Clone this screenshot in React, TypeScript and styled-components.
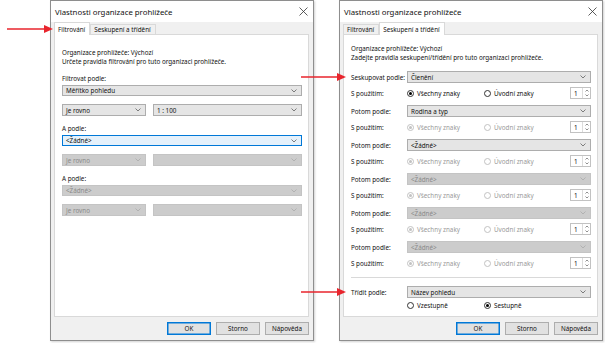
import React from "react";
import styled, { createGlobalStyle, css } from "styled-components";

const GlobalStyle = createGlobalStyle`
  html, body {
    margin: 0;
    padding: 0;
    background: #ffffff;
  }
  body {
    font-family: "Noto Sans", "DejaVu Sans", sans-serif;
    font-size: 6.3px;
    color: #111111;
  }
`;

const Page = styled.div`
  position: relative;
  width: 605px;
  height: 343px;
  box-sizing: border-box;
  padding-left: 50px;
  display: flex;
  gap: 25px;
  overflow: hidden;
  background: #ffffff;
`;

const Dialog = styled.div`
  width: 264px;
  height: 341px;
  box-sizing: border-box;
  border: 1px solid #8e8e8e;
  background: #f0f0f0;
  display: flex;
  flex-direction: column;
  box-shadow: 1px 1px 2px rgba(0, 0, 0, 0.18);
`;

const TitleBar = styled.div`
  height: 21px;
  flex: none;
  background: #ffffff;
  display: flex;
  align-items: center;
  justify-content: space-between;
  padding: 0 5px 0 4px;
  font-size: 7.8px;
`;

const Body = styled.div`
  flex: 1;
  display: flex;
  flex-direction: column;
  padding: 1px 4px 0 3px;
`;

const TabStrip = styled.div`
  height: 12px;
  display: flex;
  align-items: flex-end;
  margin-bottom: -1px;
  position: relative;
  z-index: 1;
`;

const Tab = styled.div<{ $active?: boolean }>`
  box-sizing: border-box;
  border: 1px solid #d9d9d9;
  border-bottom: none;
  padding: 0 4px 0 3px;
  display: flex;
  align-items: center;
  ${(p) =>
    p.$active
      ? css`
          height: 13px;
          background: #ffffff;
        `
      : css`
          height: 10px;
          background: #f0f0f0;
          margin-bottom: 1px;
        `}
`;

const Panel = styled.div<{ $top: number }>`
  height: 283px;
  box-sizing: border-box;
  background: #ffffff;
  border: 1px solid #d9d9d9;
  padding: ${(p) => p.$top}px 6px 0 7px;
  display: flex;
  flex-direction: column;
`;

const Info = styled.div`
  line-height: 9px;
`;

const Footer = styled.div`
  display: flex;
  justify-content: flex-end;
  gap: 5px;
  padding: 5px 0 0 0;
`;

const Button = styled.div<{ $default?: boolean }>`
  width: 44px;
  height: 13px;
  box-sizing: border-box;
  background: #e1e1e1;
  border: 1px solid ${(p) => (p.$default ? "#0078d7" : "#adadad")};
  box-shadow: ${(p) => (p.$default ? "inset 0 0 0 0.5px #0078d7" : "none")};
  display: flex;
  align-items: center;
  justify-content: center;
`;

type ComboState = "normal" | "focus" | "disabled";

const ComboBox = styled.div<{ $state: ComboState; $width?: number }>`
  height: 12px;
  box-sizing: border-box;
  ${(p) => (p.$width ? `width: ${p.$width}px; flex: none;` : "flex: 1;")}
  display: flex;
  align-items: center;
  justify-content: space-between;
  padding: 0 4px 0 3px;
  border: 1px solid;
  ${(p) =>
    p.$state === "focus"
      ? css`
          background: #e5f1fb;
          border-color: #0078d7;
          color: #111;
        `
      : p.$state === "disabled"
      ? css`
          background: #cccccc;
          border-color: #c4c4c4;
          color: #8a8a8a;
        `
      : css`
          background: #e5e5e5;
          border-color: #adadad;
          color: #111;
        `}
`;

const Chevron = ({ muted }: { muted?: boolean }) => (
  <svg width="6" height="4" viewBox="0 0 6 4">
    <polyline
      points="0.5,0.5 3,3 5.5,0.5"
      fill="none"
      stroke={muted ? "#aaaaaa" : "#606060"}
      strokeWidth="0.8"
    />
  </svg>
);

const Combo = ({
  text,
  state = "normal",
  width,
}: {
  text?: string;
  state?: ComboState;
  width?: number;
}) => (
  <ComboBox $state={state} $width={width}>
    <span>{text}</span>
    <Chevron muted={state === "disabled"} />
  </ComboBox>
);

/* ---- filter tab ---- */

const FilterGroup = styled.div<{ $gap: number }>`
  display: flex;
  flex-direction: column;
  margin-top: ${(p) => p.$gap}px;
`;

const FieldLabel = styled.div`
  line-height: 9px;
  margin-bottom: 2px;
`;

const ComboPair = styled.div`
  display: flex;
  gap: 7px;
  margin-top: 8px;
`;

/* ---- grouping tab ---- */

const SortGroup = styled.div<{ $gap: number }>`
  display: flex;
  flex-direction: column;
  gap: 3px;
  margin-top: ${(p) => p.$gap}px;
`;

const FieldRow = styled.div`
  display: flex;
  align-items: center;
  min-height: 12px;
`;

const RowLabel = styled.div`
  width: 56px;
  flex: none;
  white-space: nowrap;
`;

const UsingRow = styled.div<{ $indent?: boolean }>`
  display: flex;
  align-items: center;
  height: 14px;
  padding-left: ${(p) => (p.$indent ? 56 : 0)}px;
`;

const RadioItem = styled.div<{ $disabled?: boolean; $wide?: boolean }>`
  display: flex;
  align-items: center;
  gap: 3px;
  width: ${(p) => (p.$wide ? 77 : 82)}px;
  flex: none;
  color: ${(p) => (p.$disabled ? "#9a9a9a" : "#111")};
`;

const RadioCircle = styled.span<{ $checked?: boolean; $disabled?: boolean }>`
  width: 7px;
  height: 7px;
  box-sizing: border-box;
  border-radius: 50%;
  border: 1px solid ${(p) => (p.$disabled ? "#c2c2c2" : "#333333")};
  background: #ffffff;
  display: flex;
  align-items: center;
  justify-content: center;
  &::after {
    content: "";
    width: 3px;
    height: 3px;
    border-radius: 50%;
    background: ${(p) => (p.$disabled ? "#c2c2c2" : "#000")};
    display: ${(p) => (p.$checked ? "block" : "none")};
  }
`;

const Spinner = styled.div`
  margin-left: auto;
  width: 21px;
  height: 12px;
  box-sizing: border-box;
  border: 1px solid #c2c2c2;
  background: #fff;
  display: flex;
  align-items: center;
  justify-content: space-between;
  padding-left: 3px;
`;

const SpinArrows = styled.div`
  width: 7px;
  height: 100%;
  border-left: 1px solid #dcdcdc;
  display: flex;
  flex-direction: column;
  align-items: center;
  justify-content: space-around;
`;

const Separator = styled.div`
  height: 1px;
  background: #d9d9d9;
  margin: 7px 0 8px 0;
`;

const Arrow = styled.svg<{ $x: number; $y: number }>`
  position: absolute;
  left: ${(p) => p.$x}px;
  top: ${(p) => p.$y - 5}px;
  overflow: visible;
`;

const RedArrow = ({ x, y, length }: { x: number; y: number; length: number }) => (
  <Arrow $x={x} $y={y} width={length} height="10">
    <line x1="0" y1="5" x2={length - 8} y2="5" stroke="#e8252d" strokeWidth="1.3" />
    <polygon points={`${length - 9},1 ${length},5 ${length - 9},9`} fill="#e8252d" />
  </Arrow>
);

const CloseIcon = () => (
  <svg width="9" height="9" viewBox="0 0 9 9">
    <path d="M0.5 0.5 L8.5 8.5 M8.5 0.5 L0.5 8.5" stroke="#333" strokeWidth="0.8" />
  </svg>
);

const Radio = ({
  label,
  checked,
  disabled,
  wide,
}: {
  label: string;
  checked?: boolean;
  disabled?: boolean;
  wide?: boolean;
}) => (
  <RadioItem $disabled={disabled} $wide={wide}>
    <RadioCircle $checked={checked} $disabled={disabled} />
    {label}
  </RadioItem>
);

const SpinBox = () => (
  <Spinner>
    1
    <SpinArrows>
      <svg width="4" height="3" viewBox="0 0 4 3">
        <polyline points="0.5,2.5 2,1 3.5,2.5" fill="none" stroke="#606060" strokeWidth="0.7" />
      </svg>
      <svg width="4" height="3" viewBox="0 0 4 3">
        <polyline points="0.5,0.5 2,2 3.5,0.5" fill="none" stroke="#606060" strokeWidth="0.7" />
      </svg>
    </SpinArrows>
  </Spinner>
);

const groups = [
  { label: "Seskupovat podle:", value: "Členění", combo: "normal", radios: false },
  { label: "Potom podle:", value: "Rodina a typ", combo: "normal", radios: true },
  { label: "Potom podle:", value: "<Žádné>", combo: "normal", radios: true },
  { label: "Potom podle:", value: "<Žádné>", combo: "disabled", radios: true },
  { label: "Potom podle:", value: "<Žádné>", combo: "disabled", radios: true },
  { label: "Potom podle:", value: "<Žádné>", combo: "disabled", radios: true },
] as const;

const Footerbar = () => (
  <Footer>
    <Button $default>OK</Button>
    <Button>Storno</Button>
    <Button>Nápověda</Button>
  </Footer>
);

const App = () => {
  return (
    <Page>
      <GlobalStyle />
      <Dialog>
        <TitleBar>
          <span>Vlastnosti organizace prohlížeče</span>
          <CloseIcon />
        </TitleBar>
        <Body>
          <TabStrip>
            <Tab $active>Filtrování</Tab>
            <Tab>Seskupení a třídění</Tab>
          </TabStrip>
          <Panel $top={13}>
            <Info>
              Organizace prohlížeče: Výchozí
              <br />
              Určete pravidla filtrování pro tuto organizaci prohlížeče.
            </Info>
            <FilterGroup $gap={8}>
              <FieldLabel>Filtrovat podle:</FieldLabel>
              <Combo text="Měřítko pohledu" />
              <ComboPair>
                <Combo text="Je rovno" width={84} />
                <Combo text="1 : 100" />
              </ComboPair>
            </FilterGroup>
            <FilterGroup $gap={8}>
              <FieldLabel>A podle:</FieldLabel>
              <Combo text="<Žádné>" state="focus" />
              <ComboPair>
                <Combo text="Je rovno" width={84} state="disabled" />
                <Combo state="disabled" />
              </ComboPair>
            </FilterGroup>
            <FilterGroup $gap={8}>
              <FieldLabel>A podle:</FieldLabel>
              <Combo text="<Žádné>" state="disabled" />
              <ComboPair>
                <Combo text="Je rovno" width={84} state="disabled" />
                <Combo state="disabled" />
              </ComboPair>
            </FilterGroup>
          </Panel>
          <Footerbar />
        </Body>
      </Dialog>

      <Dialog>
        <TitleBar>
          <span>Vlastnosti organizace prohlížeče</span>
          <CloseIcon />
        </TitleBar>
        <Body>
          <TabStrip>
            <Tab>Filtrování</Tab>
            <Tab $active>Seskupení a třídění</Tab>
          </TabStrip>
          <Panel $top={9}>
            <Info>
              Organizace prohlížeče: Výchozí
              <br />
              Zadejte pravidla seskupení/třídění pro tuto organizaci prohlížeče.
            </Info>
            {groups.map((g, i) => (
              <SortGroup key={i} $gap={i === 0 ? 9 : 5}>
                <FieldRow>
                  <RowLabel>{g.label}</RowLabel>
                  <Combo text={g.value} state={g.combo} />
                </FieldRow>
                <UsingRow>
                  <RowLabel>S použitím:</RowLabel>
                  <Radio label="Všechny znaky" checked disabled={g.radios} wide />
                  <Radio label="Úvodní znaky" disabled={g.radios} />
                  <SpinBox />
                </UsingRow>
              </SortGroup>
            ))}
            <Separator />
            <FieldRow>
              <RowLabel>Třídit podle:</RowLabel>
              <Combo text="Název pohledu" />
            </FieldRow>
            <UsingRow $indent>
              <Radio label="Vzestupně" wide />
              <Radio label="Sestupně" checked />
            </UsingRow>
          </Panel>
          <Footerbar />
        </Body>
      </Dialog>

      <RedArrow x={7} y={29} length={46} />
      <RedArrow x={301} y={77} length={45} />
      <RedArrow x={301} y={292} length={45} />
    </Page>
  );
};

export default App;
